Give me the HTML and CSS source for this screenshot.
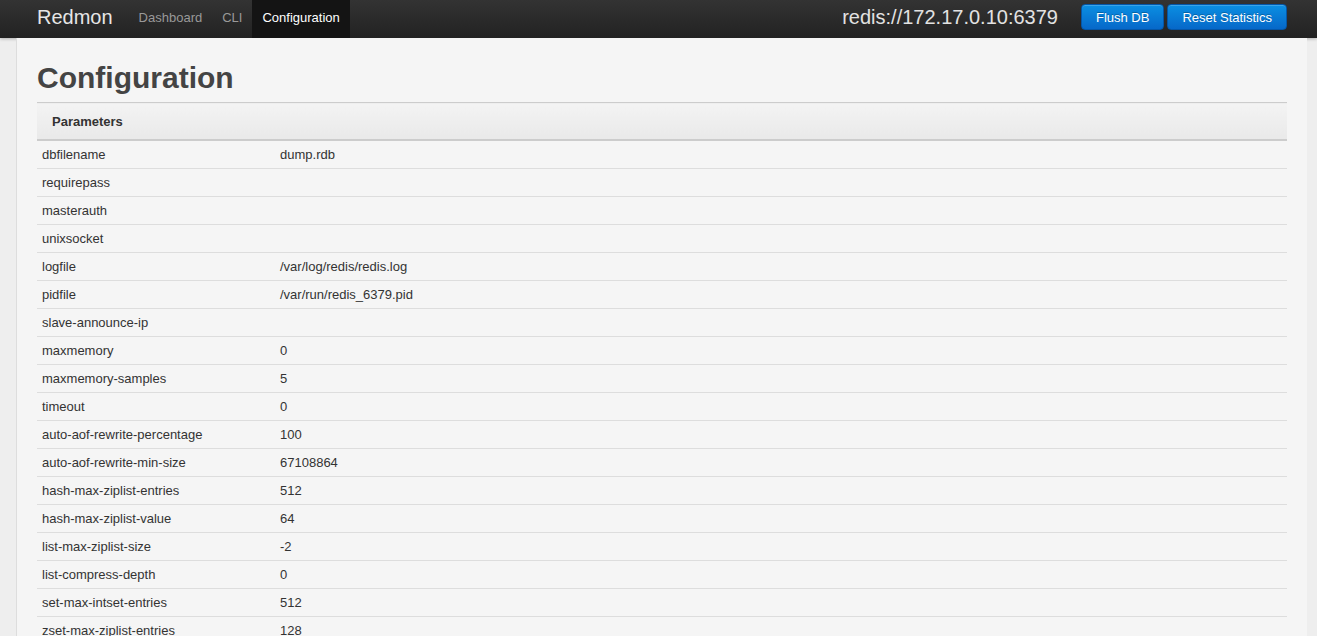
FILE: index.html
```html
<!doctype html>
<html lang="en">
	<head>
		<meta charset="UTF-8" />
		<meta name="viewport" content="width=device-width, initial-scale=1.0" />
		<title>Redmon - Configuration</title>
		<link rel="stylesheet" href="styles.css">
	</head>
	<body>
		<header class="navbar">
			<div class="navbar-inner">
				<a href="#" class="brand">Redmon</a>
				<nav class="nav">
					<a href="#">Dashboard</a>
					<a href="#">CLI</a>
					<a href="#" class="active">Configuration</a>
				</nav>
				<div class="navbar-right">
					<span class="server">redis://172.17.0.10:6379</span>
					<button type="button" class="btn">Flush DB</button>
					<button type="button" class="btn">Reset Statistics</button>
				</div>
			</div>
		</header>

		<main class="content">
			<h1>Configuration</h1>

			<table class="params">
				<thead>
					<tr><th colspan="2">Parameters</th></tr>
				</thead>
				<tbody>
					<tr><td class="key">dbfilename</td><td>dump.rdb</td></tr>
					<tr><td class="key">requirepass</td><td></td></tr>
					<tr><td class="key">masterauth</td><td></td></tr>
					<tr><td class="key">unixsocket</td><td></td></tr>
					<tr><td class="key">logfile</td><td>/var/log/redis/redis.log</td></tr>
					<tr><td class="key">pidfile</td><td>/var/run/redis_6379.pid</td></tr>
					<tr><td class="key">slave-announce-ip</td><td></td></tr>
					<tr><td class="key">maxmemory</td><td>0</td></tr>
					<tr><td class="key">maxmemory-samples</td><td>5</td></tr>
					<tr><td class="key">timeout</td><td>0</td></tr>
					<tr><td class="key">auto-aof-rewrite-percentage</td><td>100</td></tr>
					<tr><td class="key">auto-aof-rewrite-min-size</td><td>67108864</td></tr>
					<tr><td class="key">hash-max-ziplist-entries</td><td>512</td></tr>
					<tr><td class="key">hash-max-ziplist-value</td><td>64</td></tr>
					<tr><td class="key">list-max-ziplist-size</td><td>-2</td></tr>
					<tr><td class="key">list-compress-depth</td><td>0</td></tr>
					<tr><td class="key">set-max-intset-entries</td><td>512</td></tr>
					<tr><td class="key">zset-max-ziplist-entries</td><td>128</td></tr>
					<tr><td class="key">zset-max-ziplist-value</td><td>64</td></tr>
					<tr><td class="key">hll-sparse-max-bytes</td><td>3000</td></tr>
					<tr><td class="key">lua-time-limit</td><td>5000</td></tr>
					<tr><td class="key">slowlog-log-slower-than</td><td>10000</td></tr>
				</tbody>
			</table>
		</main>
	</body>
</html>
```

FILE: styles.css
```css
html,
body {
	margin: 0;
	padding: 0;
}

body {
	background-color: #eeeeee;
	font-family: "Liberation Sans", Arial, sans-serif;
	font-size: 13px;
	color: #333;
	padding: 0 10px 0 16px;
}

/* Top bar spans the full window, content lines up with the panel */
.navbar {
	margin: 0 -10px 0 -16px;
	height: 38px;
	background: linear-gradient(#333333, #222222);
	box-shadow: 0 1px 3px rgba(0, 0, 0, 0.25);
}

.navbar-inner {
	display: flex;
	align-items: center;
	height: 34px;
	padding: 0 30px 0 37px;
}

.brand {
	color: #e6e6e6;
	font-size: 20px;
	font-weight: 200;
	text-decoration: none;
	margin-right: 16px;
}

.nav {
	display: flex;
	align-self: stretch;
	margin-bottom: -4px;
}

.nav a {
	display: flex;
	align-items: center;
	padding: 0 10px 4px;
	color: #999;
	text-decoration: none;
}

.nav a.active {
	background-color: #141414;
	color: #fff;
}

.navbar-right {
	margin-left: auto;
	display: flex;
	align-items: center;
	gap: 3px;
}

.server {
	color: #e2e2e2;
	font-size: 20px;
	font-weight: 200;
	margin-right: 20px;
}

.btn {
	font-family: inherit;
	font-size: 13px;
	color: #fff;
	height: 26px;
	padding: 0 14px;
	border: 1px solid #0456a8;
	border-radius: 4px;
	background: linear-gradient(#0b8fe2, #0668c9);
	text-shadow: 0 -1px 0 rgba(0, 0, 0, 0.25);
	box-shadow: inset 0 1px 0 rgba(255, 255, 255, 0.2);
}

.content {
	background-color: #f5f5f5;
	border-left: 1px solid #dddddd;
	padding: 20px 20px 40px;
}

h1 {
	margin: 0 0 4px;
	font-size: 30px;
	line-height: 40px;
	color: #444;
}

.params {
	width: 100%;
	border-collapse: collapse;
}

.params th {
	height: 36px;
	padding: 0 15px;
	text-align: left;
	font-size: 13px;
	color: #333;
	background: linear-gradient(#f3f3f3, #e9e9e9);
	border-top: 1px solid #cccccc;
	border-bottom: 2px solid #cccccc;
	box-shadow: 0 1px 0 #e2e2e2;
}

.params td {
	height: 27px;
	padding: 0 5px;
	border-bottom: 1px solid #dddddd;
	color: #333;
}

.params td.key {
	width: 228px;
}
```
